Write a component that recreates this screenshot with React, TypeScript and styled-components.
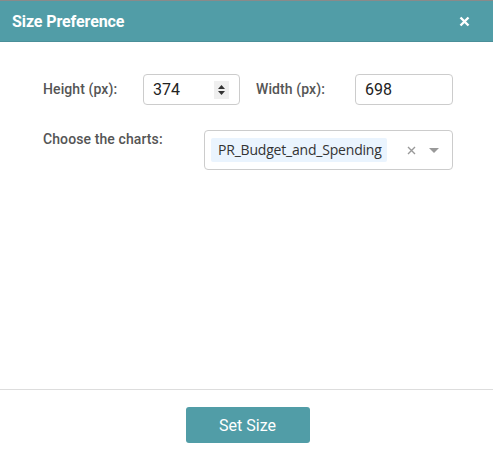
import React from "react";
import styled, { createGlobalStyle } from "styled-components";

const GlobalStyle = createGlobalStyle`
    html, body {
        margin: 0;
        padding: 0;
        background: #ffffff;
    }
    body {
        font-family: Roboto, "Liberation Sans", Arial, sans-serif;
    }
`;

const Dialog = styled.div`
    width: 493px;
    height: 453px;
    display: flex;
    flex-direction: column;
    border-top: 1px solid #8a8a8a;
    box-sizing: border-box;
`;

const Header = styled.div`
    height: 41px;
    background: #519da7;
    border-bottom: 1px solid #4a8f99;
    display: flex;
    align-items: center;
    justify-content: space-between;
    padding: 0 22px 0 12px;
    box-sizing: border-box;
    flex-shrink: 0;
`;

const Title = styled.h2`
    margin: 0;
    color: #ffffff;
    font-size: 16px;
    font-weight: 700;
    letter-spacing: -0.1px;
`;

const CloseButton = styled.button`
    border: none;
    background: none;
    padding: 0;
    width: 14px;
    height: 14px;
    display: flex;
    align-items: center;
    justify-content: center;
    cursor: pointer;
`;

const Body = styled.div`
    flex: 1;
    padding: 32px 40px 0 43px;
    display: flex;
    flex-direction: column;
    gap: 25px;
`;

const Row = styled.div`
    display: flex;
    align-items: flex-start;
`;

const Label = styled.label<{ $width: number; $top?: number }>`
    width: ${(p) => p.$width}px;
    flex-shrink: 0;
    color: #555555;
    font-size: 14px;
    font-weight: 500;
    letter-spacing: 0.1px;
    padding-top: ${(p) => p.$top ?? 7}px;
`;

const InputBox = styled.div<{ $width: number }>`
    width: ${(p) => p.$width}px;
    height: 31px;
    border: 1px solid #cccccc;
    border-radius: 4px;
    box-sizing: border-box;
    display: flex;
    align-items: center;
    padding: 0 10px 0 9px;
    flex-shrink: 0;
`;

const Value = styled.span`
    flex: 1;
    font-size: 16px;
    color: #222222;
`;

const Spinner = styled.div`
    width: 15px;
    height: 18px;
    background: #efefef;
    display: flex;
    align-items: center;
    justify-content: center;
`;

const Gap = styled.div<{ $width: number }>`
    width: ${(p) => p.$width}px;
    flex-shrink: 0;
`;

const Select = styled.div`
    width: 249px;
    height: 40px;
    border: 1px solid #cccccc;
    border-radius: 4px;
    box-sizing: border-box;
    display: flex;
    align-items: center;
    padding: 0 13px 0 6px;
`;

const Chip = styled.span`
    background: #eaf4fe;
    color: #333333;
    font-family: "Open Sans", "Liberation Sans", sans-serif;
    font-size: 14px;
    padding: 2px 5px 3px 7px;
    border-radius: 2px;
    line-height: 19px;
    letter-spacing: -0.2px;
`;

const Controls = styled.div`
    margin-left: auto;
    display: flex;
    align-items: center;
    gap: 13px;
`;

const Footer = styled.div`
    height: 64px;
    border-top: 1px solid #dddddd;
    display: flex;
    justify-content: center;
    padding: 17px 0 0 2px;
    box-sizing: border-box;
    flex-shrink: 0;
`;

const SubmitButton = styled.button`
    width: 124px;
    height: 36px;
    border: none;
    border-radius: 3px;
    background: #519da7;
    color: #ffffff;
    font-family: Roboto, "Liberation Sans", sans-serif;
    font-size: 16px;
    cursor: pointer;
`;

const App: React.FC = () => {
    return (
        <>
            <GlobalStyle />
            <Dialog>
                <Header>
                    <Title>Size Preference</Title>
                    <CloseButton aria-label="close">
                        <svg width="11" height="11" viewBox="0 0 11 11">
                            <path d="M1.5 1.5 L9.5 9.5 M9.5 1.5 L1.5 9.5" stroke="#fff" strokeWidth="2.4" />
                        </svg>
                    </CloseButton>
                </Header>
                <Body>
                    <Row>
                        <Label $width={100}>Height (px):</Label>
                        <InputBox $width={97}>
                            <Value>374</Value>
                            <Spinner>
                                <svg width="9" height="12" viewBox="0 0 9 12">
                                    <path d="M4.5 1 L8 5 L1 5 Z M1 7 L8 7 L4.5 11 Z" fill="#333" />
                                </svg>
                            </Spinner>
                        </InputBox>
                        <Gap $width={16} />
                        <Label $width={99}>Width (px):</Label>
                        <InputBox $width={98}>
                            <Value>698</Value>
                        </InputBox>
                    </Row>
                    <Row>
                        <Label $width={161} $top={1}>Choose the charts:</Label>
                        <Select>
                            <Chip>PR_Budget_and_Spending</Chip>
                            <Controls>
                                <svg width="9" height="9" viewBox="0 0 9 9">
                                    <path d="M1 1 L8 8 M8 1 L1 8" stroke="#999" strokeWidth="1.4" />
                                </svg>
                                <svg width="10" height="5" viewBox="0 0 10 5">
                                    <path d="M0 0 L10 0 L5 5 Z" fill="#999" />
                                </svg>
                            </Controls>
                        </Select>
                    </Row>
                </Body>
                <Footer>
                    <SubmitButton>Set Size</SubmitButton>
                </Footer>
            </Dialog>
        </>
    );
};

export default App;
